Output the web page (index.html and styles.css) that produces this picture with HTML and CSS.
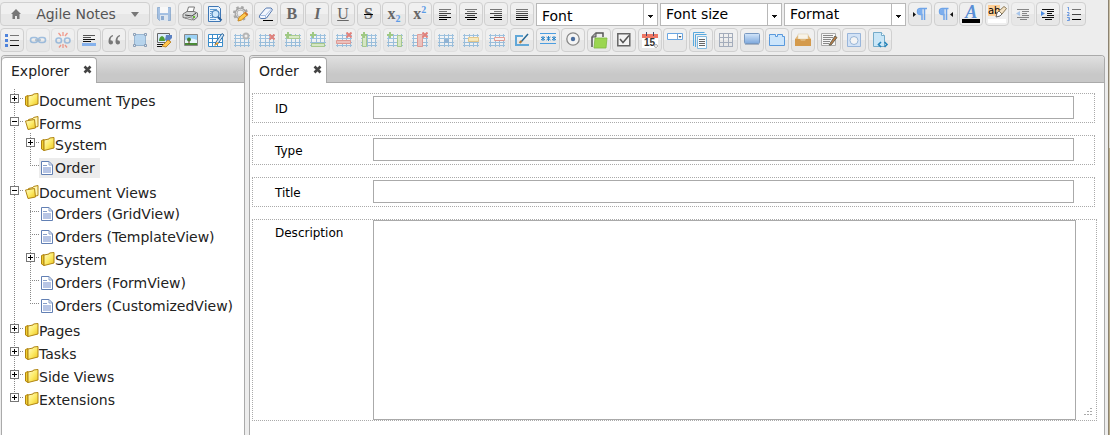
FILE: index.html
```html
<!DOCTYPE html>
<html lang="en">
<head>
<meta charset="utf-8">
<title>Agile Notes</title>
<link rel="stylesheet" href="styles.css">
</head>
<body>
<svg class="defs" aria-hidden="true">
  <defs>
    <linearGradient id="gold" x1="0" y1="0" x2="1" y2="1"><stop offset="0" stop-color="#fffbd0"/><stop offset=".5" stop-color="#fdec6a"/><stop offset="1" stop-color="#ecc41c"/></linearGradient>
    <linearGradient id="blue" x1="0" y1="0" x2="0" y2="1"><stop offset="0" stop-color="#d3e6fa"/><stop offset="1" stop-color="#7ea8dc"/></linearGradient>
    <symbol id="grid" viewBox="0 0 16 16"><path d="M1 3h14v11H1z" fill="#f4f8fc"/><path d="M0 3.500h16M0 6.500h16M0 10.500h16M0 13.500h16M1.500 2v13M6.500 2v13M10.500 2v13M14.500 2v13" stroke="#5a9bd0" fill="none"/></symbol>
    <symbol id="plus" viewBox="0 0 6 6"><path d="M2 0h2v2h2v2H4v2H2V4H0V2h2z" fill="#5eaa2c"/></symbol>
    <symbol id="cross" viewBox="0 0 6 6"><path d="M.5 .5l5 5m0-5l-5 5" stroke="#d8281c" stroke-width="2"/></symbol>
    <symbol id="close" viewBox="0 0 9 9"><path d="M1.500 1.500l6 6m0-6l-6 6" stroke="#444" stroke-width="2.600"/></symbol>
    <symbol id="folder" viewBox="0 0 14 14"><path d="M.5 3.500l2.500-1v11l-2.500-1.500z" fill="#f1cf2f" stroke="#b08412"/><path d="M3 3l5-1 .5-1 4.500-.5v10.500L3 13.500z" fill="url(#gold)" stroke="#b08412"/></symbol>
    <symbol id="open" viewBox="0 0 14 14"><path d="M3.500 3.500l4.500-1 .5-1 4.500-1v10L4 12.500z" fill="#fff6ae" stroke="#b08412"/><path d="M.5 5l9-1.500 1 8.500-7.500 1.500z" fill="url(#gold)" stroke="#b08412"/></symbol>
    <symbol id="doc" viewBox="0 0 12 14"><path d="M.5 .5h7.500l3.500 3.500v9.500H.5z" fill="#fff" stroke="#6280b4"/><path d="M2 6h8v6H2z" fill="#b7c5e5"/><path d="M8 .5V4h3.500M2 4.500h4" fill="none" stroke="#879fc9"/></symbol>
  </defs>
</svg>
<div class="app">
<header class="toolbar">
  <div class="bar">
    <button class="menu" type="button">
      <svg class="home" viewBox="0 0 10 10"><path d="M5 0l5 5H8.500v5H6V7H4v3H1.500V5H0z" fill="#777"/></svg>
      <span>Agile Notes</span>
      <svg class="caret" viewBox="0 0 8 5"><path d="M0 0h8L4 5z" fill="#777"/></svg>
    </button>
    <div class="group lead">
      <button disabled title="Save"><svg viewBox="0 0 16 16"><path d="M1.500 1.500h13v13h-11l-2-2z" fill="#6a9ddc" stroke="#4d80bd"/><path d="M4 1h8v6H4z" fill="#fff"/><path d="M4 9h8v6H4z" fill="#d6e4f4"/><path d="M5 10h3v4H5z" fill="#447bc0"/></svg></button>
      <button title="Print"><svg viewBox="0 0 16 16"><path d="M5 6l1.500-5h6L11 6z" fill="#fff" stroke="#777"/><path d="M1 8l4-2.500h7L15.500 7v4l-3.500 3L1 11.500z" fill="#d4d6d6" stroke="#777"/><path d="M3 9l7 1 4-3" stroke="#444" fill="none"/><path d="M3 12l7 2 1.500-1.500L5 11z" fill="#fff" stroke="#888"/><path d="M11 11h2" stroke="#60b830" stroke-width="2"/></svg></button>
      <button title="Preview"><svg viewBox="0 0 16 16"><path d="M1.500 .5h10l2 2v13h-12z" fill="#e8f3fd" stroke="#3f77b5"/><path d="M3 3.500h7M3 5.500h2M3 7.500h1M3 9.500h1M3 11.500h3M3 13.500h6" stroke="#5e9bd2"/><circle cx="8.500" cy="8" r="3.500" fill="#cfe9fc" stroke="#4680b8" stroke-width="1.200"/><path d="M11 11l3.500 3.500" stroke="#2b629f" stroke-width="2.200"/></svg></button>
      <button title="Settings"><svg viewBox="0 0 16 16"><circle cx="7.500" cy="7.500" r="4.500" fill="none" stroke="#a5a5a5" stroke-width="3"/><circle cx="7.500" cy="7.500" r="6.500" fill="none" stroke="#a5a5a5" stroke-width="2" stroke-dasharray="2.500 2.600"/><circle cx="7.500" cy="7.500" r="4.200" fill="none" stroke="#ddd"/><path d="M5 15l1-3.500 6-5 2.500 2.500-6 5z" fill="#ffc94d" stroke="#c98a22"/><path d="M12 6.500L14.500 9" stroke="#d4762a" stroke-width="2"/></svg></button>
      <button title="Erase"><svg viewBox="0 0 16 16"><path d="M1.500 9.500l6-7Q8 2 9 2h4q2 1 1 2.500L8.500 12q-.5.500-1.500.500H3Q.5 12 1.500 9.500z" fill="#f2f6fe" stroke="#5578ae"/><path d="M2 9.500h5.500l6-6.500M7.500 9.500v2.500" fill="none" stroke="#a5bde2"/><path d="M5 14.500h10" stroke="#000"/></svg></button>
      <button class="glyph" title="Bold">B</button>
      <button class="glyph ital" title="Italic">I</button>
      <button class="glyph under" title="Underline">U</button>
      <button class="glyph strike" title="Strikethrough">S</button>
      <button class="glyph" title="Subscript">x<sub>2</sub></button>
      <button class="glyph" title="Superscript">x<sup>2</sup></button>
      <button title="Align left"><svg viewBox="0 0 16 16"><path d="M2 3.500h12M2 5.500h8" stroke="#777"/><path d="M2 7.500h12M2 9.500h8" stroke="#444"/><path d="M2 11.500h12M2 13.500h8" stroke="#000"/></svg></button>
      <button title="Align center"><svg viewBox="0 0 16 16"><path d="M2 3.500h12M4 5.500h8" stroke="#777"/><path d="M2 7.500h12M4 9.500h8" stroke="#444"/><path d="M2 11.500h12M4 13.500h8" stroke="#000"/></svg></button>
      <button title="Align right"><svg viewBox="0 0 16 16"><path d="M2 3.500h12M6 5.500h8" stroke="#777"/><path d="M2 7.500h12M6 9.500h8" stroke="#444"/><path d="M2 11.500h12M6 13.500h8" stroke="#000"/></svg></button>
      <button title="Justify"><svg viewBox="0 0 16 16"><path d="M2 3.500h12M2 5.500h12" stroke="#777"/><path d="M2 7.500h12M2 9.500h12" stroke="#444"/><path d="M2 11.500h12M2 13.500h12" stroke="#000"/></svg></button>
    </div>
    <div class="combo"><select class="low" aria-label="Font"><option>Font</option></select></div>
    <div class="combo"><select aria-label="Font size"><option>Font size</option></select></div>
    <div class="combo"><select aria-label="Format"><option>Format</option></select></div>
    <div class="group tail">
      <button title="Left to right"><svg viewBox="0 0 16 16"><path d="M1 6l3 2.500L1 11z" fill="#111"/><path d="M15 2.500H8.500a3 3 0 0 0 0 6H10V14M12.500 3v11" fill="none" stroke="#6fa4e8" stroke-width="1.500"/><path d="M8.500 3H10.500v5.500H8.500a2.700 2.700 0 0 1 0-5.500z" fill="#7caeee"/></svg></button>
      <button title="Right to left"><svg viewBox="0 0 16 16"><path d="M15 6l-3 2.500L15 11z" fill="#111"/><path d="M10.500 2.500H4.500a3 3 0 0 0 0 6H6V14M8.500 3v11" fill="none" stroke="#6fa4e8" stroke-width="1.500"/><path d="M4.500 3H6.500v5.500H4.500a2.700 2.700 0 0 1 0-5.500z" fill="#7caeee"/></svg></button>
      <button class="glyph colour" title="Text color">A</button>
      <button class="highlight" title="Highlight"><span>ab</span><svg viewBox="0 0 12 12"><path d="M1 11l1-4 2-2 3 3-2 2z" fill="#fff" stroke="#666"/><path d="M4 5l5-4.500 2.500 2L7 8z" fill="#f4e2c4" stroke="#8a7a5a"/></svg></button>
      <button disabled title="Outdent"><svg viewBox="0 0 16 16"><path d="M2 3.500h12M7 5.500h7M7 7.500h5M7 9.500h7M2 11.500h12M5 13.500h7" stroke="#333"/><path d="M5 5v5L1 7.500z" fill="#70a6e8"/></svg></button>
      <button title="Indent"><svg viewBox="0 0 16 16"><path d="M2 3.500h12M7 5.500h7M7 7.500h5M7 9.500h7M2 11.500h12M5 13.500h7" stroke="#111"/><path d="M1 5v5l4-2.500z" fill="#4b8be0"/></svg></button>
      <button title="Numbered list"><svg viewBox="0 0 16 16"><path d="M6 3.500h9" stroke="#777"/><path d="M6 8.500h9" stroke="#444"/><path d="M6 13.500h9" stroke="#000"/><path d="M1.500 2l1-1v3.500M1 6.500h2v1.500L1 9.500h2.500M1 11.500h2.500v3H1m1-1.500h1" fill="none" stroke="#6e9be0"/></svg></button>
    </div>
  </div>
  <div class="bar">
    <div class="group wide">
      <button title="Bulleted list"><svg viewBox="0 0 16 16"><path d="M6 3.500h9" stroke="#777"/><path d="M6 8.500h9" stroke="#444"/><path d="M6 13.500h9" stroke="#000"/><path d="M1 2h3v3H1zM1 7h3v3H1zM1 12h3v3H1z" fill="#4e83dc"/></svg></button>
      <button disabled title="Link"><svg viewBox="0 0 16 16"><rect x=".5" y="5.500" width="7" height="5" rx="2.500" fill="none" stroke="#5f97d0" stroke-width="1.600"/><rect x="8.500" y="5.500" width="7" height="5" rx="2.500" fill="none" stroke="#5f97d0" stroke-width="1.600"/><path d="M5 8h6" stroke="#6b8cae" stroke-width="1.500"/></svg></button>
      <button disabled title="Unlink"><svg viewBox="0 0 16 16"><rect x="1" y="6" width="5.500" height="5" rx="2.500" fill="none" stroke="#5f97d0" stroke-width="1.600"/><rect x="9.500" y="6" width="5.500" height="5" rx="2.500" fill="none" stroke="#5f97d0" stroke-width="1.600"/><path d="M8 0v4M3.500 1l2.500 3M12.500 1L10 4M8 12v4M4 15.500l2-2.500M12 15.500L10 13" stroke="#f0543c" stroke-width="1.300"/></svg></button>
      <button title="Horizontal rule"><svg viewBox="0 0 16 16"><path d="M2 3.500h12M2 5.500h8" stroke="#555"/><path d="M2 7.500h12M2 9.500h8" stroke="#111"/><path d="M1 11h14v3H1z" fill="#85b1ec"/></svg></button>
      <button title="Quote"><svg viewBox="0 0 16 16"><path d="M7 3C4 3.500 2.500 6 2.500 9.500c0 2 1 3 2.300 3S7 11.500 7 10.200 6 8.200 4.500 8.200C4.500 6 5.500 4.700 7 4.200zM14 3c-3 .5-4.500 3-4.500 6.500 0 2 1 3 2.300 3s2.200-1 2.200-2.300-1-2-2.500-2C11.500 6 12.500 4.700 14 4.200z" fill="#777"/></svg></button>
      <button disabled title="Container"><svg viewBox="0 0 16 16"><path d="M2.500 2.500h11v11h-11z" fill="#8fc4f0" stroke="#558abb"/><path d="M1.500 1.500h2v2h-2zM12.500 1.500h2v2h-2zM1.500 12.500h2v2h-2zM12.500 12.500h2v2h-2z" fill="#ddeaf6" stroke="#3c5f8a"/></svg></button>
      <button title="Edit picture"><svg viewBox="0 0 16 16"><path d="M.5 1.500h12v9H.5z" fill="#dceefb" stroke="#666"/><path d="M2 9q0-4 3-5 3 1 3 5z" fill="#4d9c35"/><path d="M0 12.500h8M0 14.500h5" stroke="#111"/><path d="M9 3h6v3l-4 4-3-2z" fill="#5b81c2"/><path d="M5 14l6-6 3 2-5 5z" fill="#ffc54e" stroke="#c08a2c"/></svg></button>
      <button title="Picture"><svg viewBox="0 0 16 16"><path d="M1.500 2.500h13v11h-13z" fill="#9bd1f5" stroke="#888"/><path d="M2 8q7-3 12 0v3H2z" fill="#e8f5fb"/><path d="M2 11h12v2H2z" fill="#4a8a38"/><circle cx="6" cy="7.500" r="2" fill="#3f7d31"/><path d="M6 9v3" stroke="#604020"/></svg></button>
      <button title="Edit table"><svg viewBox="0 0 16 16"><path d="M.5 2.500h14v12H.5zM0 6.500h15M0 10.500h15M4.500 2v12.500M9.500 2v12.500" fill="#fff" stroke="#3a8cca"/><path d="M7 13l1-3 6-8.500 2 1.500-6 8.500z" fill="#cfe7fb" stroke="#336b9d"/><path d="M6 14l3-4 2 1.500z" fill="#f1a42e"/></svg></button>
      <button disabled title="Table properties"><svg viewBox="0 0 16 16"><use href="#grid"/><circle cx="12" cy="4" r="2.500" fill="#eee" stroke="#888" stroke-width="2"/></svg></button>
      <button disabled title="Delete table"><svg viewBox="0 0 16 16"><use href="#grid"/><use href="#cross" x="10" y="2" width="6" height="6"/></svg></button>
      <button disabled title="Insert row above"><svg viewBox="0 0 16 16"><use href="#grid"/><path d="M1.500 3.500h13v3h-13z" fill="#c8e6a8" stroke="#72ae42"/><use href="#plus" width="6" height="6"/></svg></button>
      <button disabled title="Insert row below"><svg viewBox="0 0 16 16"><use href="#grid"/><path d="M1.500 11.500h13v3h-13z" fill="#c8e6a8" stroke="#72ae42"/><use href="#plus" width="6" height="6"/></svg></button>
      <button disabled title="Delete row"><svg viewBox="0 0 16 16"><use href="#grid"/><path d="M.5 8.500h14v3H.5z" fill="#efa29a" stroke="#d65c52"/><use href="#cross" x="10" width="6" height="6"/></svg></button>
      <button disabled title="Insert column left"><svg viewBox="0 0 16 16"><use href="#grid"/><path d="M1.500 3.500h4v11h-4z" fill="#c8e6a8" stroke="#72ae42"/><use href="#plus" width="6" height="6"/></svg></button>
      <button disabled title="Insert column right"><svg viewBox="0 0 16 16"><use href="#grid"/><path d="M10.500 3.500h4v11h-4z" fill="#c8e6a8" stroke="#72ae42"/><use href="#plus" width="6" height="6"/></svg></button>
      <button disabled title="Delete column"><svg viewBox="0 0 16 16"><use href="#grid"/><path d="M5.500 2.500h5v12h-5z" fill="#efa29a" stroke="#d65c52"/><use href="#cross" x="10" width="6" height="6"/></svg></button>
      <button disabled title="Cell properties"><svg viewBox="0 0 16 16"><use href="#grid"/><path d="M6 7h5v4H6z" fill="#4a89c6"/></svg></button>
      <button disabled title="Merge cells"><svg viewBox="0 0 16 16"><use href="#grid"/><path d="M5.500 5.500h10v4h-10z" fill="#ffe590" stroke="#dba63c"/></svg></button>
      <button disabled title="Split cells"><svg viewBox="0 0 16 16"><use href="#grid"/><path d="M5.500 5.500h10v3h-10z" fill="#fff0ee" stroke="#db5d50"/></svg></button>
      <button title="Text input"><svg viewBox="0 0 16 16"><path d="M9 4H2v9h13" fill="none" stroke="#62a8d8" stroke-width="2"/><path d="M7 10l7-8" stroke="#286894" stroke-width="1.500"/><path d="M5.500 11l2-2" stroke="#b77b35" stroke-width="2"/></svg></button>
      <button title="Password"><svg viewBox="0 0 16 16"><path d="M0 1.500h16M0 11.500h16" stroke="#4b9de0"/><path d="M3 4v5M1 5l4 3M5 5L1 8M8.500 4v5M6.500 5l4 3M10.500 5l-4 3M14 4v5M12 5l4 3M16 5l-4 3" stroke="#2682c8"/></svg></button>
      <button title="Radio"><svg viewBox="0 0 16 16"><circle cx="8" cy="7" r="6.200" fill="#f4f4f4" stroke="#888" stroke-width="1.300"/><circle cx="8" cy="7" r="2.200" fill="#4b6e9e"/></svg></button>
      <button title="File"><svg viewBox="0 0 16 16"><path d="M1 15V5l4-4h7v4" fill="#eee" stroke="#555" stroke-width="1.500"/><path d="M1 5h4V1" fill="#aaa" stroke="#555"/><path d="M4 6h12l-1 10H3z" fill="#9bd650" stroke="#7db840" stroke-width=".8"/></svg></button>
      <button title="Checkbox"><svg viewBox="0 0 16 16"><path d="M1.800 1.800h12v12h-12z" fill="#f4f4f4" stroke="#666" stroke-width="1.500"/><path d="M4 7l3 3.500 6-7" fill="none" stroke="#555" stroke-width="1.500"/></svg></button>
      <button class="date" title="Date"><svg viewBox="0 0 16 16"><path d="M0 2h16v14H0z" fill="#fff"/><path d="M0 2h16v4H0z" fill="#ee7663"/><path d="M4.500 0v4M11.500 0v4" stroke="#446"/><text x="2" y="14">15</text><circle cx="14" cy="14" r="1.500" fill="#fff" stroke="#aaa"/></svg></button>
      <button title="Combo box"><svg viewBox="0 0 16 16"><path d="M.5 1.500h15v6H.5z" fill="#fff" stroke="#6aa6e2"/><path d="M10.500 2v6" stroke="#79a5d2"/><path d="M11.500 4h3L13 6z" fill="#555"/></svg></button>
      <button title="Text area"><svg viewBox="0 0 16 16"><path d="M.5 14V.5h11" fill="none" stroke="#58a9df"/><path d="M2.500 15V2.500h11" fill="none" stroke="#58a9df"/><path d="M4.500 4.500h9v12h-9z" fill="#f8fbfd" stroke="#82b9df"/><path d="M6 7.500h6M6 9.500h6M6 11.500h6M6 13.500h6" stroke="#666"/></svg></button>
      <button title="Table"><svg viewBox="0 0 16 16"><path d="M1.500 1v14M5.500 1v14M10.500 1v14M14.500 1v14M1 1.500h14M1 5.500h14M1 10.500h14M1 14.500h14" stroke="#a3acbb"/></svg></button>
      <button title="Button"><svg viewBox="0 0 16 16"><rect x=".5" y="1.500" width="15" height="10" rx="1" fill="url(#blue)" stroke="#7898c0"/><path d="M1 12.500h14" stroke="#aab4c2"/></svg></button>
      <button title="Tabs"><svg viewBox="0 0 16 16"><path d="M.5 4.500V2.500h6v2h2v-2h5v2h2v9H.5z" fill="#cce5fb" stroke="#5999dc"/></svg></button>
      <button title="Archive"><svg viewBox="0 0 16 16"><path d="M0 7l3-4h10l3 4v7H0z" fill="#e0b474"/><path d="M3 2h10v5H3z" fill="#f8f3e8" stroke="#d8c8a8" stroke-width=".5"/><path d="M0 7h5l1 2h4l1-2h5v7H0z" fill="#d49a4c"/></svg></button>
      <button title="Rich text"><svg viewBox="0 0 16 16"><path d="M.5 1.500h14v12H.5z" fill="#f6f6f6" stroke="#aaa"/><path d="M2 3.500h10M2 5.500h10M2 7.500h8M2 9.500h7M2 11.500h6" stroke="#888"/><path d="M8 13l6-9 2 1.500L10 13z" fill="#bf7b43" stroke="#665"/></svg></button>
      <button title="Widget"><svg viewBox="0 0 16 16"><path d="M1.500 1.500h13v13h-13z" fill="#d3e3f6" stroke="#98b5da"/><circle cx="8" cy="8.500" r="4" fill="#f4f4f4" stroke="#98b5d6"/></svg></button>
      <button title="Script"><svg viewBox="0 0 16 16"><path d="M1.500 .5h8l3 3v11h-11z" fill="#c9e6f7" stroke="#74abc9"/><path d="M9.500 .5v3h3" fill="#fff" stroke="#74abc9"/><path d="M9 10l-2.500 2.500L9 15M12.500 10l2.500 2.500L12.500 15" fill="none" stroke="#2785ba" stroke-width="1.600"/></svg></button>
    </div>
  </div>
</header>
<main class="work">
  <section class="panel side">
    <div class="tabs"><div class="tab">Explorer<button class="close" title="Close"><svg viewBox="0 0 9 9"><use href="#close"/></svg></button></div></div>
    <nav class="body">
      <ul class="tree root">
        <li><div class="node"><button class="toggle shut" aria-label="Expand"></button><svg class="dir" viewBox="0 0 14 14"><use href="#folder"/></svg><span>Document Types</span></div></li>
        <li><div class="node"><button class="toggle" aria-label="Collapse"></button><svg class="dir" viewBox="0 0 14 14"><use href="#open"/></svg><span>Forms</span></div>
          <ul class="tree">
            <li><div class="node"><button class="toggle shut" aria-label="Expand"></button><svg class="dir" viewBox="0 0 14 14"><use href="#folder"/></svg><span>System</span></div></li>
            <li><div class="node leaf"><a class="item current" href="#order"><svg class="page" viewBox="0 0 12 14"><use href="#doc"/></svg>Order</a></div></li>
          </ul></li>
        <li><div class="node"><button class="toggle" aria-label="Collapse"></button><svg class="dir" viewBox="0 0 14 14"><use href="#open"/></svg><span>Document Views</span></div>
          <ul class="tree">
            <li><div class="node leaf"><a class="item" href="#grid-view"><svg class="page" viewBox="0 0 12 14"><use href="#doc"/></svg>Orders (GridView)</a></div></li>
            <li><div class="node leaf"><a class="item" href="#template-view"><svg class="page" viewBox="0 0 12 14"><use href="#doc"/></svg>Orders (TemplateView)</a></div></li>
            <li><div class="node"><button class="toggle shut" aria-label="Expand"></button><svg class="dir" viewBox="0 0 14 14"><use href="#folder"/></svg><span>System</span></div></li>
            <li><div class="node leaf"><a class="item" href="#form-view"><svg class="page" viewBox="0 0 12 14"><use href="#doc"/></svg>Orders (FormView)</a></div></li>
            <li><div class="node leaf"><a class="item" href="#customized-view"><svg class="page" viewBox="0 0 12 14"><use href="#doc"/></svg>Orders (CustomizedView)</a></div></li>
          </ul></li>
        <li><div class="node"><button class="toggle shut" aria-label="Expand"></button><svg class="dir" viewBox="0 0 14 14"><use href="#folder"/></svg><span>Pages</span></div></li>
        <li><div class="node"><button class="toggle shut" aria-label="Expand"></button><svg class="dir" viewBox="0 0 14 14"><use href="#folder"/></svg><span>Tasks</span></div></li>
        <li><div class="node"><button class="toggle shut" aria-label="Expand"></button><svg class="dir" viewBox="0 0 14 14"><use href="#folder"/></svg><span>Side Views</span></div></li>
        <li><div class="node"><button class="toggle shut" aria-label="Expand"></button><svg class="dir" viewBox="0 0 14 14"><use href="#folder"/></svg><span>Extensions</span></div></li>
      </ul>
    </nav>
  </section>
  <section class="panel editor">
    <div class="tabs"><div class="tab">Order<button class="close" title="Close"><svg viewBox="0 0 9 9"><use href="#close"/></svg></button></div></div>
    <form class="form">
      <div class="field"><label for="id">ID</label><input id="id" type="text"></div>
      <div class="field"><label for="type">Type</label><input id="type" type="text"></div>
      <div class="field"><label for="title">Title</label><input id="title" type="text"></div>
      <div class="field tall"><label for="description">Description</label><textarea id="description"></textarea>
        <svg class="grip" viewBox="0 0 8 8"><path d="M6 0h2v1H6zM3 3h2v1H3zM6 3h2v1H6zM0 6h2v1H0zM3 6h2v1H3zM6 6h2v1H6z" fill="#aaa"/></svg></div>
    </form>
  </section>
</main>
</div>
</body>
</html>
```
FILE: styles.css
```css
* { box-sizing: border-box; }
body { margin: 0; background: #ededed; font: 14px/20px Verdana, "DejaVu Sans", sans-serif; color: #222; }
button, select, input, textarea { font: inherit; color: inherit; }
button { padding: 0; margin: 0; }
.defs { position: absolute; width: 0; height: 0; }
.app {
  display: flex; flex-direction: column; min-height: 100vh; padding-right: 5px;
  background:
    linear-gradient(#8b8271, #8b8271) right 1px top / 1px 100% no-repeat,
    linear-gradient(#c9bd9f, #dfddd4 148px, #b9ad8b 148px) right top / 1px 100% no-repeat;
}

.toolbar { display: flex; flex-direction: column; gap: 2px; padding: 2px 0 3px; }
.bar { display: flex; gap: 2px; height: 24px; }
.group { display: flex; justify-content: space-between; flex: none; }
.lead { width: 382px; }
.tail { width: 178px; }
.wide { width: 892px; }
.group button, .menu {
  display: flex; align-items: center; justify-content: center;
  height: 24px; border: 1px solid #d0d0d0; border-radius: 4px;
  background: linear-gradient(#f0f0f0 50%, #e7e7e7 50%);
}
.group button { width: 24px; }
.group button:disabled { border-color: #dfdfdf; }
.group button:disabled svg { opacity: .55; }
.group svg { width: 16px; height: 16px; overflow: visible; }
.menu { width: 150px; padding: 0 10px; justify-content: space-between; color: #555; }
.home { width: 10px; height: 10px; }
.caret { width: 8px; height: 5px; }
.group .glyph { font: bold 16px/20px "Liberation Serif", serif; color: #666; }
.group .glyph.ital { font-style: italic; }
.group .glyph.under { font-weight: normal; text-decoration: underline; }
.group .glyph.strike { text-decoration: line-through #000; }
.glyph sub, .glyph sup { font-size: 10px; line-height: 12px; color: #5c9be6; }
.glyph sub { align-self: flex-end; }
.glyph sup { align-self: flex-start; padding-top: 1px; vertical-align: baseline; }
.glyph sub { vertical-align: baseline; }
.group .colour { font-style: italic; font-size: 18px; line-height: 18px; color: #5a8fd6; background: linear-gradient(#000, #000) center 16px / 18px 4px no-repeat, #efefef; align-items: flex-start; }
.group .highlight { position: relative; align-items: flex-start; justify-content: flex-start; padding: 2px; font: 10px/11px "DejaVu Sans", sans-serif; color: #000; background: linear-gradient(#fff, #fff) center 16px / 18px 4px no-repeat, #efefef; }
.highlight span { background: #ffd097; }
.group .highlight svg { position: absolute; right: 1px; top: 3px; width: 12px; height: 12px; }
.date text { font: bold 10px "Liberation Sans", sans-serif; fill: #333; }
.combo { width: 122px; height: 23px; margin-top: 1px; }
.combo select {
  appearance: none; width: 100%; height: 100%; padding: 0 20px 2px 5px;
  border: 1px solid #b8b8b8; border-radius: 0; color: #000;
  background:
    linear-gradient(#111, #111) right 4px top 11px / 5px 1px no-repeat,
    linear-gradient(#111, #111) right 5px top 12px / 3px 1px no-repeat,
    linear-gradient(#111, #111) right 6px top 13px / 1px 1px no-repeat,
    linear-gradient(#b8b8b8, #b8b8b8) right 13px top / 1px 100% no-repeat,
    #fff;
}
.combo .low { padding: 2px 20px 0 5px; }

.work { flex: 1; display: flex; gap: 4px; padding-left: 1px; }
.panel { display: flex; flex-direction: column; border: 1px solid #aaa; border-bottom: 0; border-radius: 4px 4px 0 0; background: #fff; }
.side { flex: none; width: 244px; }
.editor { flex: 1; min-width: 0; }
.tabs { display: flex; height: 27px; padding-top: 1px; border-bottom: 1px solid #aaa; border-radius: 3px 3px 0 0; background: linear-gradient(#e0e0e0, #c8c8c8 70%); }
.tab { display: flex; align-items: center; gap: 14px; height: 26px; padding: 0 4px 0 9px; border: 1px solid #aaa; border-bottom: 0; border-left: 0; border-radius: 4px 4px 0 0; background: #fff; }
.close { display: flex; margin-bottom: 2px; border: 0; background: none; }
.close svg { width: 9px; height: 9px; }

.body { padding: 6px 0 0 8px; }
.tree { list-style: none; margin: 0; padding: 0; background: repeating-linear-gradient(#888 0 1px, transparent 1px 2px) 4px 0 / 1px calc(100% - 15px) no-repeat; }
.tree .tree { margin: -2px 0 2px 16px; }
.node { display: flex; align-items: center; height: 23px; background: repeating-linear-gradient(90deg, #888 0 1px, transparent 1px 2px) 4px 9px / 10px 1px no-repeat; }
.toggle {
  flex: none; width: 9px; height: 9px; margin: 0 6px 5px 0; border: 1px solid #777;
  background: linear-gradient(#000, #000) center / 5px 1px no-repeat, #fff;
}
.shut { background: linear-gradient(#000, #000) center / 5px 1px no-repeat, linear-gradient(#000, #000) center / 1px 5px no-repeat, #fff; }
.dir { flex: none; width: 14px; height: 14px; margin-bottom: 1px; }
.page { flex: none; width: 12px; height: 14px; }
.leaf { padding-left: 13px; }
.item { display: flex; align-items: center; gap: 2px; padding: 0 5px 0 2px; color: inherit; text-decoration: none; white-space: nowrap; }
.current { background: #ececec; }

.form { display: flex; flex-direction: column; gap: 12px; padding: 10px 9px 14px 2px; color: #000; font-size: 12px; }
.field { display: grid; grid-template-columns: 120px 1fr; padding: 2px 20px 3px 0; border: 1px dotted #aaa; }
.field label { padding: 3px 0 0 22px; }
.field input { height: 23px; }
.field input, .field textarea { width: 100%; padding: 2px 4px; border: 1px solid #aaa; border-radius: 0; background: #fff; resize: none; outline: 0; }
.tall { position: relative; margin-right: -2px; padding: 0 20px 0 0; }
.tall textarea { height: 200px; display: block; }
.grip { position: absolute; right: 4px; bottom: 4px; width: 8px; height: 8px; }
```
